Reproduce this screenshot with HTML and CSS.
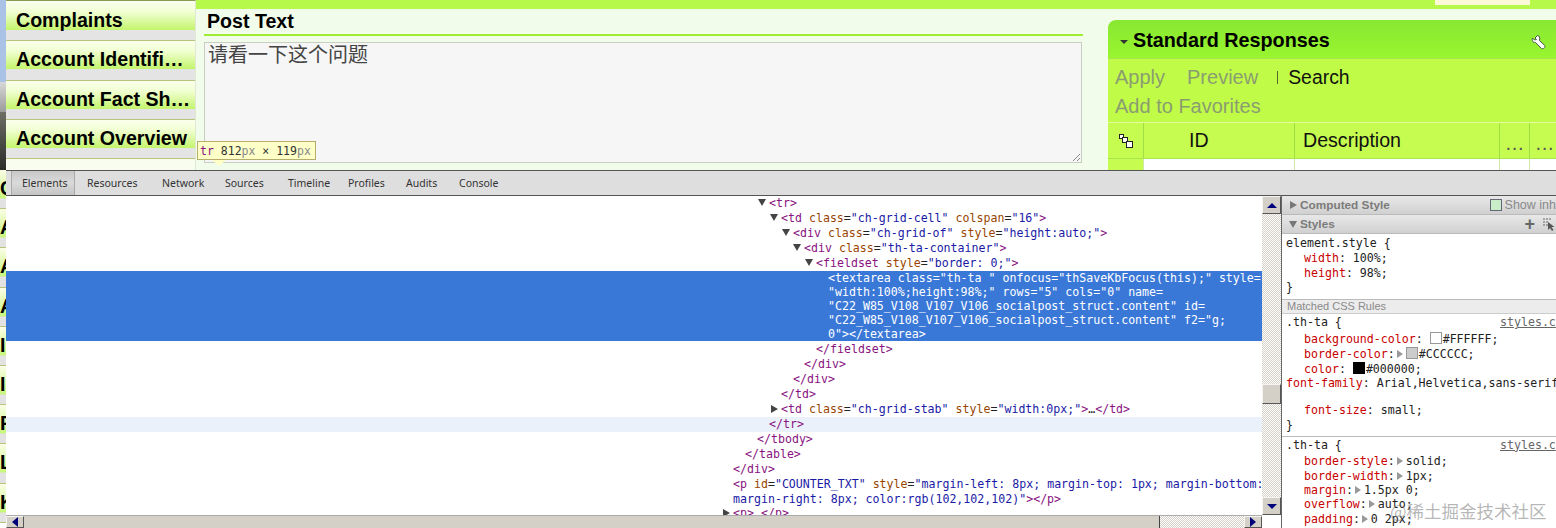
FILE: index.html
```html
<!DOCTYPE html>
<html lang="en">
    <head>
        <meta charset="UTF-8" />
        <title>Post Text</title>
        <link rel="stylesheet" href="styles.css">
    </head>
    <body>
        <div class="page">
            <!-- Sliver of the app that stays visible left of the inspector -->
            <div class="strip">
                <div class="strip-bg strip-blue"></div>
                <div class="strip-bg strip-gray"></div>
                <div class="strip-bg strip-dark"></div>
                <div class="strip-row"><span>C</span></div>
                <div class="strip-row"><span>A</span></div>
                <div class="strip-row"><span>A</span></div>
                <div class="strip-row"><span>A</span></div>
                <div class="strip-row"><span>I</span></div>
                <div class="strip-row"><span>I</span></div>
                <div class="strip-row"><span>F</span></div>
                <div class="strip-row"><span>L</span></div>
                <div class="strip-row"><span>K</span></div>
            </div>

            <div class="column">
                <div class="app">
                    <div class="nav">
                        <div class="nav-item"><span class="nav-label">Complaints</span></div>
                        <div class="nav-item"><span class="nav-label">Account Identifi…</span></div>
                        <div class="nav-item"><span class="nav-label">Account Fact Sh…</span></div>
                        <div class="nav-item"><span class="nav-label">Account Overview</span></div>
                    </div>

                    <div class="content">
                        <div class="top-bar">
                            <div class="top-tag"></div>
                        </div>
                        <div class="panels">
                            <div class="post">
                                <h2 class="post-title">Post Text</h2>
                                <div class="post-box">
                                    <span class="post-text">请看一下这个问题</span>
                                    <svg class="resizer" width="10" height="10" viewBox="0 0 10 10">
                                        <path d="M9 2 2 9M9 6 6 9" stroke="#8a8a8a" fill="none" />
                                    </svg>
                                </div>
                            </div>

                            <div class="responses">
                                <div class="resp-head">
                                    <span class="caret"></span>
                                    <span class="resp-title">Standard Responses</span>
                                    <svg class="wrench" width="16" height="16" viewBox="0 0 16 16">
                                        <path d="M6.500 1.500 4 4 5.500 5.500 3.500 6 1.500 4C.8 6.500 1.500 8.500 4.500 8.500L10.500 14.500C12 15.500 14.800 13.500 13.800 11.500L8.500 6.500C9 3.500 8.500 1.800 6.500 1.500Z" fill="#fff" stroke="#4a5a4a" stroke-width="1" stroke-linejoin="round" />
                                    </svg>
                                </div>
                                <div class="resp-tools">
                                    <div class="tool-row">
                                        <span class="tool">Apply</span>
                                        <span class="tool">Preview</span>
                                        <span class="tool-sep"></span>
                                        <span class="tool tool-on">Search</span>
                                    </div>
                                    <div class="tool-row">
                                        <span class="tool">Add to Favorites</span>
                                    </div>
                                </div>
                                <div class="grid-head">
                                    <div class="cell cell-icon">
                                        <svg width="16" height="16" viewBox="0 0 16 16">
                                            <rect x="1.500" y="1.500" width="4" height="4" fill="#fff" stroke="#222" />
                                            <rect x="4.500" y="4.500" width="5" height="5" fill="#fff" stroke="#222" />
                                            <rect x="8.500" y="8.500" width="6" height="6" fill="#fff" stroke="#222" />
                                        </svg>
                                    </div>
                                    <div class="cell cell-id">ID</div>
                                    <div class="cell cell-desc">Description</div>
                                    <div class="cell cell-more">…</div>
                                    <div class="cell cell-more">…</div>
                                </div>
                                <div class="grid-row">
                                    <div class="gcell gcell-icon"></div>
                                    <div class="gcell gcell-id"></div>
                                    <div class="gcell gcell-desc"></div>
                                    <div class="gcell gcell-more"></div>
                                    <div class="gcell gcell-more"></div>
                                </div>
                            </div>
                        </div>
                    </div>
                </div>

                <div class="devtools">
                    <div class="tabs">
                        <span class="tab tab-on">Elements</span>
                        <span class="tab">Resources</span>
                        <span class="tab">Network</span>
                        <span class="tab">Sources</span>
                        <span class="tab">Timeline</span>
                        <span class="tab">Profiles</span>
                        <span class="tab">Audits</span>
                        <span class="tab">Console</span>
                    </div>
                    <div class="dev-body">
                        <div class="dom-wrap">
                            <div class="dom">
                                <div class="dl l3"><i class="tw"></i><b>&lt;tr&gt;</b></div>
                                <div class="dl l4"><i class="tw"></i><b>&lt;td</b> <u>class</u>=<s>"ch-grid-cell"</s> <u>colspan</u>=<s>"16"</s><b>&gt;</b></div>
                                <div class="dl l5"><i class="tw"></i><b>&lt;div</b> <u>class</u>=<s>"ch-grid-of"</s> <u>style</u>=<s>"height:auto;"</s><b>&gt;</b></div>
                                <div class="dl l6"><i class="tw"></i><b>&lt;div</b> <u>class</u>=<s>"th-ta-container"</s><b>&gt;</b></div>
                                <div class="dl l7"><i class="tw"></i><b>&lt;fieldset</b> <u>style</u>=<s>"border: 0;"</s><b>&gt;</b></div>
                                <div class="selected">
                                    <div>&lt;textarea class="th-ta " onfocus="thSaveKbFocus(this);" style=</div>
                                    <div>"width:100%;height:98%;" rows="5" cols="0" name=</div>
                                    <div>"C22_W85_V108_V107_V106_socialpost_struct.content" id=</div>
                                    <div>"C22_W85_V108_V107_V106_socialpost_struct.content" f2="g;</div>
                                    <div>0"&gt;&lt;/textarea&gt;</div>
                                </div>
                                <div class="dl l7"><b>&lt;/fieldset&gt;</b></div>
                                <div class="dl l6"><b>&lt;/div&gt;</b></div>
                                <div class="dl l5"><b>&lt;/div&gt;</b></div>
                                <div class="dl l4"><b>&lt;/td&gt;</b></div>
                                <div class="dl l4"><i class="tw tw-r"></i><b>&lt;td</b> <u>class</u>=<s>"ch-grid-stab"</s> <u>style</u>=<s>"width:0px;"</s><b>&gt;</b>…<b>&lt;/td&gt;</b></div>
                                <div class="dl l3 hover"><b>&lt;/tr&gt;</b></div>
                                <div class="dl l2"><b>&lt;/tbody&gt;</b></div>
                                <div class="dl l1"><b>&lt;/table&gt;</b></div>
                                <div class="dl l0"><b>&lt;/div&gt;</b></div>
                                <div class="dl l0"><b>&lt;p</b> <u>id</u>=<s>"COUNTER_TXT"</s> <u>style</u>=<s>"margin-left: 8px; margin-top: 1px; margin-bottom:</s></div>
                                <div class="dl l0 wrapped"><s>margin-right: 8px; color:rgb(102,102,102)"</s><b>&gt;&lt;/p&gt;</b></div>
                                <div class="dl l0"><i class="tw tw-r"></i><b>&lt;p&gt;</b>…<b>&lt;/p&gt;</b></div>
                            </div>
                            <div class="hbar">
                                <span class="sb-btn sb-h"><i class="arr arr-l"></i></span>
                                <span class="hbar-thumb"></span>
                                <span class="hbar-track"></span>
                                <span class="sb-btn sb-h"><i class="arr arr-r"></i></span>
                            </div>
                        </div>

                        <div class="vbar-wrap">
                            <div class="vbar">
                                <span class="sb-btn sb-v"><i class="arr arr-u"></i></span>
                                <span class="vbar-track vbar-track-a"></span>
                                <span class="vbar-thumb"></span>
                                <span class="vbar-track vbar-track-b"></span>
                                <span class="sb-btn sb-v"><i class="arr arr-d"></i></span>
                            </div>
                        </div>

                        <div class="side">
                            <div class="side-head">
                                <i class="side-tw side-tw-r"></i>
                                <span class="side-name">Computed Style</span>
                                <span class="inherit"><i class="inherit-box"></i>Show inh</span>
                            </div>
                            <div class="side-head side-head-b">
                                <i class="side-tw"></i>
                                <span class="side-name">Styles</span>
                                <span class="plus">+</span>
                                <svg class="picker" width="13" height="13" viewBox="0 0 13 13">
                                    <path d="M0 1h2M3 1h2M6 1h2M0 4h2M0 7h2M3 4h2M3 7h2" stroke="#666" />
                                    <path d="M5 4v8l2-2 2 3 1.500-1-2-3h3z" fill="#555" />
                                </svg>
                            </div>
                            <div class="rules">
                                <div class="rl">element.style {</div>
                                <div class="rl pr"><em>width</em>: 100%;</div>
                                <div class="rl pr"><em>height</em>: 98%;</div>
                                <div class="rl">}</div>
                            </div>
                            <div class="matched">Matched CSS Rules</div>
                            <div class="rules rules-b">
                                <div class="rl rl-sel">.th-ta { <a class="src">styles.c</a></div>
                                <div class="rl pr rl-tall"><em>background-color</em>: <i class="sw sw-white"></i>#FFFFFF;</div>
                                <div class="rl pr"><em>border-color</em>:<i class="mini"></i><i class="sw sw-gray"></i>#CCCCCC;</div>
                                <div class="rl pr"><em>color</em>: <i class="sw sw-black"></i>#000000;</div>
                                <div class="rl rl-wide"><em>font-family</em>: Arial,Helvetica,sans-serif;</div>
                                <div class="rl rl-blank"></div>
                                <div class="rl pr"><em>font-size</em>: small;</div>
                                <div class="rl">}</div>
                            </div>
                            <div class="rules rules-c">
                                <div class="rl rl-sel">.th-ta { <a class="src">styles.c</a></div>
                                <div class="rl pr"><em>border-style</em>:<i class="mini"></i>solid;</div>
                                <div class="rl pr"><em>border-width</em>:<i class="mini"></i>1px;</div>
                                <div class="rl pr"><em>margin</em>:<i class="mini"></i>1.5px 0;</div>
                                <div class="rl pr"><em>overflow</em>:<i class="mini"></i>auto;</div>
                                <div class="rl pr"><em>padding</em>:<i class="mini"></i>0 2px;</div>
                            </div>
                        </div>
                    </div>
                </div>
            </div>

            <!-- Inspector tooltip over the page -->
            <div class="tip"><span class="tip-tag">tr</span> 812<span class="tip-unit">px</span> × 119<span class="tip-unit">px</span></div>

            <div class="watermark">@稀土掘金技术社区</div>
        </div>
    </body>
</html>
```

FILE: styles.css
```css
* {
    box-sizing: border-box;
}

body {
    margin: 0;
    background-color: #fff;
    font-family: "Liberation Sans", Arial, sans-serif;
}

.page {
    position: relative;
    display: flex;
    width: 1556px;
    height: 528px;
    overflow: hidden;
}

/* left sliver */
.strip {
    width: 6px;
    flex-shrink: 0;
    overflow: hidden;
    display: flex;
    flex-direction: column;
}

.strip-bg {
    flex-shrink: 0;
}

.strip-blue {
    height: 82px;
    background-color: #a9c2e6;
}

.strip-gray {
    height: 30px;
    background: linear-gradient(#d8d8d8, #9a9a9a);
}

.strip-dark {
    height: 58px;
    background: linear-gradient(#6e6e66, #2b2b28);
}

.strip-row {
    height: 39.2px;
    flex-shrink: 0;
    padding-top: 7px;
    border-bottom: 1px solid #b7c57c;
    background: linear-gradient(#fbfee8 0, #c8f77a 28px, #e2e2e2 29px);
    font-size: 19.600px;
    font-weight: bold;
    line-height: 23px;
    color: #000;
    white-space: nowrap;
}

.strip-row span {
    display: block;
}

.column {
    flex: 1;
    min-width: 0;
    display: flex;
    flex-direction: column;
}

/* app */
.app {
    height: 170px;
    flex-shrink: 0;
    display: flex;
    overflow: hidden;
    background-color: #f1fcea;
}

.nav {
    width: 190px;
    flex-shrink: 0;
    padding-top: 1px;
    border-top: 1px solid #8a9a50;
    border-right: 1px solid #dfe8d2;
    background-color: #f8fdf0;
}

.nav-item {
    height: 39.300px;
    padding: 7px 0 0 10px;
    border-bottom: 1px solid #b7c57c;
    background: linear-gradient(#fbffec 0, #f1ffd2 10px, #c6f572 27px, #c2f468 28px, #e4e4e4 28px);
}

.nav-label {
    font-size: 19.600px;
    font-weight: bold;
    line-height: 23px;
    color: #000;
    white-space: nowrap;
}

.content {
    flex: 1;
    min-width: 0;
    display: flex;
    flex-direction: column;
}

.top-bar {
    height: 9px;
    flex-shrink: 0;
    background-color: #b6f94a;
}

.top-tag {
    width: 95px;
    height: 5px;
    margin-left: 1239px;
    background-color: #fdf8d8;
}

.panels {
    flex: 1;
    display: flex;
    padding-left: 8px;
}

.post {
    width: 879px;
    flex-shrink: 0;
    display: flex;
    flex-direction: column;
}

.post-title {
    height: 27px;
    margin: 0 0 6px;
    padding: 1px 0 0 3px;
    border-bottom: 2px solid #9fee33;
    font-size: 19.600px;
    line-height: 23px;
    color: #000;
}

.post-box {
    position: relative;
    height: 121px;
    padding: 0 3px;
    border: 1px solid #c8cfc0;
    background-color: #f5f6f5;
    margin-right: 1px;
}

.post-text {
    font-family: "Noto Sans CJK SC", sans-serif;
    font-size: 20px;
    line-height: 22px;
    color: #444;
}

.resizer {
    position: absolute;
    right: 0;
    bottom: 0;
}

.responses {
    flex: 1;
    min-width: 0;
    margin: 11px 0 0 25px;
    border-radius: 8px 0 0 0;
    overflow: hidden;
    background-color: #fff;
}

.resp-head {
    height: 39px;
    display: flex;
    align-items: center;
    padding: 2px 9px 0 12px;
    border-bottom: 1px solid #a6e653;
    background: linear-gradient(#88e832, #99f52f);
}

.caret {
    width: 0;
    height: 0;
    margin: 3px 5px 0 0;
    border-top: 4px solid #333;
    border-left: 4px solid transparent;
    border-right: 4px solid transparent;
}

.resp-title {
    flex: 1;
    font-size: 19.800px;
    font-weight: bold;
    color: #000;
}

.wrench {
    margin-top: 4px;
}

.resp-tools {
    height: 63px;
    padding: 4px 0 0 7px;
    background-color: #c0fb48;
}

.tool-row {
    height: 29px;
    display: flex;
    align-items: center;
}

.tool {
    margin-right: 22px;
    font-size: 20px;
    color: #8b9d70;
}

.tool-sep {
    width: 1px;
    height: 13px;
    margin: 0 10px 0 -3px;
    background-color: #55662f;
}

.tool-on {
    font-size: 19.400px;
    color: #111;
}

.grid-head,
.grid-row {
    display: flex;
}

.grid-head {
    height: 37px;
    border-top: 1px solid #e3fb9f;
    border-bottom: 1px solid #a6e653;
    background-color: #c6fb50;
}

.cell {
    flex-shrink: 0;
    display: flex;
    align-items: center;
    font-size: 19.600px;
    color: #111;
    border-right: 1px solid #9fdf45;
}

.cell-icon {
    width: 36px;
    padding-left: 10px;
}

.cell-id {
    width: 151px;
    padding-left: 45px;
}

.cell-desc {
    width: 205px;
    padding-left: 8px;
}

.cell-more {
    width: 30px;
    justify-content: center;
    color: #555;
    padding-top: 6px;
}

.grid-row {
    height: 12px;
}

.gcell {
    flex-shrink: 0;
    border-right: 1px solid #cfe8a8;
}

.gcell-icon {
    width: 36px;
    background-color: #c6fb50;
}

.gcell-id {
    width: 151px;
}

.gcell-desc {
    width: 205px;
}

.gcell-more {
    width: 30px;
}

/* inspector */
.devtools {
    flex: 1;
    min-height: 0;
    display: flex;
    flex-direction: column;
    border-top: 1px solid #555;
    background-color: #fff;
}

.tabs {
    height: 25px;
    flex-shrink: 0;
    display: grid;
    grid-template-columns: 65px 75px 63px 63px 60px 58px 53px auto;
    justify-content: start;
    padding-left: 5px;
    border-bottom: 1px solid #555;
    background-color: #dedede;
}

.tab {
    display: flex;
    align-items: center;
    padding-left: 11px;
    font-family: "Noto Sans", sans-serif;
    font-size: 10.500px;
    color: #333;
    white-space: nowrap;
}

.tab-on {
    padding-left: 10px;
    margin-right: 1px;
    border-left: 1px solid #aaa;
    border-right: 1px solid #aaa;
    background: linear-gradient(#c8c8c8, #dadada 50%, #c4c4c4);
}

.dev-body {
    flex: 1;
    min-height: 0;
    display: flex;
}

.dom-wrap {
    width: 1256px;
    flex-shrink: 0;
    display: flex;
    flex-direction: column;
}

.dom {
    flex: 1;
    min-height: 0;
    overflow: hidden;
    font-family: "DejaVu Sans Mono", monospace;
    font-size: 11.600px;
    line-height: 15px;
    color: #222;
    white-space: nowrap;
}

.dl {
    position: relative;
    height: 15px;
}

.wrapped {
    height: 14px;
    line-height: 14px;
}

.dl b {
    font-weight: normal;
    color: #881280;
}

.dl u {
    text-decoration: none;
    color: #994500;
}

.dl s {
    text-decoration: none;
    color: #1a1aa6;
}

.l0 { padding-left: 727px; }
.l1 { padding-left: 739px; }
.l2 { padding-left: 751px; }
.l3 { padding-left: 763px; }
.l4 { padding-left: 775px; }
.l5 { padding-left: 787px; }
.l6 { padding-left: 798px; }
.l7 { padding-left: 810px; }

.hover {
    background-color: #ebf1fb;
}

.tw {
    position: absolute;
    top: 3px;
    margin-left: -11px;
    width: 0;
    height: 0;
    border-top: 7px solid #444;
    border-left: 4px solid transparent;
    border-right: 4px solid transparent;
}

.tw-r {
    margin-left: -10px;
    border-top: 4px solid transparent;
    border-bottom: 4px solid transparent;
    border-left: 7px solid #444;
    border-right: 0;
}

.selected {
    height: 70px;
    margin-bottom: 1px;
    padding: 0 0 0 822px;
    background-color: #3a78d8;
    color: #fff;
    line-height: 14px;
}

/* scrollbars */
.hbar {
    height: 13px;
    flex-shrink: 0;
    display: flex;
    background-color: #d4d0c8;
    border-top: 1px solid #aaa;
}

.sb-btn {
    display: flex;
    align-items: center;
    justify-content: center;
    background-color: #d4d0c8;
    border: 1px solid;
    border-color: #f5f4f0 #555 #555 #f5f4f0;
    flex-shrink: 0;
}

.sb-h {
    width: 18px;
}

.sb-v {
    height: 18px;
}

.hbar-thumb {
    width: 1136px;
    background-color: #d4d0c8;
    border-right: 1px solid #444;
}

.hbar-track,
.vbar-track {
    flex: 1;
    background: repeating-conic-gradient(#d4d0c8 0 25%, #fff 0 50%) 0 0 / 2px 2px;
}

.arr {
    width: 0;
    height: 0;
    border-style: solid;
    border-color: transparent;
}

.arr-l {
    border-width: 5px 6px 5px 0;
    border-right-color: #00007a;
}

.arr-r {
    border-width: 5px 0 5px 6px;
    border-left-color: #00007a;
}

.arr-u {
    border-width: 0 5px 5px;
    border-bottom-color: #00007a;
}

.arr-d {
    border-width: 5px 5px 0;
    border-top-color: #00007a;
}

.vbar-wrap {
    width: 20px;
    flex-shrink: 0;
    padding-bottom: 13px;
    border-right: 1px solid #666;
}

.vbar {
    height: 100%;
    display: flex;
    flex-direction: column;
}

.vbar-track-a {
    flex: 0 0 170px;
}

.vbar-track-b {
    flex: 1;
}

.vbar-thumb {
    height: 20px;
    flex-shrink: 0;
    background-color: #d4d0c8;
    border: 1px solid;
    border-color: #f5f4f0 #555 #555 #f5f4f0;
}

/* sidebar */
.side {
    flex: 1;
    min-width: 0;
    overflow: hidden;
    font-family: "DejaVu Sans Mono", monospace;
    font-size: 11.600px;
    color: #222;
}

.side-head {
    height: 19px;
    display: flex;
    align-items: center;
    padding-left: 7px;
    border-bottom: 1px solid #bbb;
    background: linear-gradient(#e8e8e8, #d0d0d0);
    font-family: "Liberation Sans", Arial, sans-serif;
    font-size: 11.800px;
    font-weight: bold;
    color: #7b7b7b;
    white-space: nowrap;
}

.side-name {
    flex: 1;
}

.side-tw {
    width: 0;
    height: 0;
    margin-right: 3px;
    border-top: 7px solid #777;
    border-left: 4px solid transparent;
    border-right: 4px solid transparent;
}

.side-tw-r {
    border-top: 4px solid transparent;
    border-bottom: 4px solid transparent;
    border-left: 7px solid #777;
    border-right: 0;
    margin-left: 1px;
}

.inherit {
    display: flex;
    align-items: center;
    flex: 0 0 64px;
    font-weight: normal;
    font-size: 12.500px;
    color: #8a8a8a;
}

.inherit-box {
    width: 12px;
    height: 12px;
    margin-right: 3px;
    border: 1px solid #667;
    background-color: #c9ecc9;
}

.plus {
    margin-right: 8px;
    font-size: 18px;
    line-height: 16px;
    color: #666;
}

.rules {
    padding: 2px 0 4px 4px;
    line-height: 14.800px;
    white-space: nowrap;
}

.rl {
    position: relative;
    height: 14.800px;
}

.pr {
    padding-left: 18px;
}

.rl em {
    font-style: normal;
    color: #c80000;
}

.rl-blank {
    height: 12px;
}

.rl-sel {
    margin-bottom: 2px;
}

.matched {
    height: 15px;
    padding: 0 0 0 5px;
    border-top: 1px solid #bbb;
    border-bottom: 1px solid #ccc;
    background-color: #ececec;
    font-family: "Liberation Sans", Arial, sans-serif;
    font-size: 11px;
    line-height: 13px;
    color: #8a8a8a;
}

.rules-b {
    padding: 1px 0 3px 4px;
}

.rules-c {
    padding: 1px 0 0 4px;
    border-top: 1px solid #bbb;
}

.rules-c .rl {
    height: 14.400px;
}

.rules-c .rl-sel {
    margin-bottom: 2px;
}

.src {
    position: absolute;
    left: 214px;
    top: 0;
    color: #666;
    text-decoration: underline;
}

.sw {
    display: inline-block;
    width: 12px;
    height: 12px;
    margin-right: 1px;
    vertical-align: -1px;
    border: 1px solid #999;
}

.sw-white {
    background-color: #fff;
}

.sw-gray {
    background-color: #ccc;
}

.sw-black {
    background-color: #000;
    border-color: #000;
}

.mini {
    display: inline-block;
    width: 0;
    height: 0;
    margin: 0 3px 0 2px;
    border-top: 4px solid transparent;
    border-bottom: 4px solid transparent;
    border-left: 6px solid #999;
}

/* tooltip */
.tip {
    position: absolute;
    left: 197px;
    top: 141px;
    width: 119px;
    height: 19px;
    padding-left: 2px;
    border: 1px solid #b6ad6c;
    background-color: #ffffc8;
    font-family: "DejaVu Sans Mono", monospace;
    font-size: 11.500px;
    line-height: 18px;
    color: #333;
    white-space: nowrap;
}

.tip::after {
    content: "";
    position: absolute;
    left: 14px;
    top: 18px;
    width: 0;
    height: 0;
    border-top: 6px solid #ffffc8;
    border-left: 7px solid transparent;
    border-right: 7px solid transparent;
}

.tip-tag {
    color: #881280;
}

.tip-unit {
    color: #888;
}

.watermark {
    position: absolute;
    left: 1390px;
    top: 500px;
    font-family: "Noto Sans CJK SC", sans-serif;
    font-size: 17.500px;
    line-height: 22px;
    color: rgba(120, 120, 120, 0.55);
    white-space: nowrap;
}
```
